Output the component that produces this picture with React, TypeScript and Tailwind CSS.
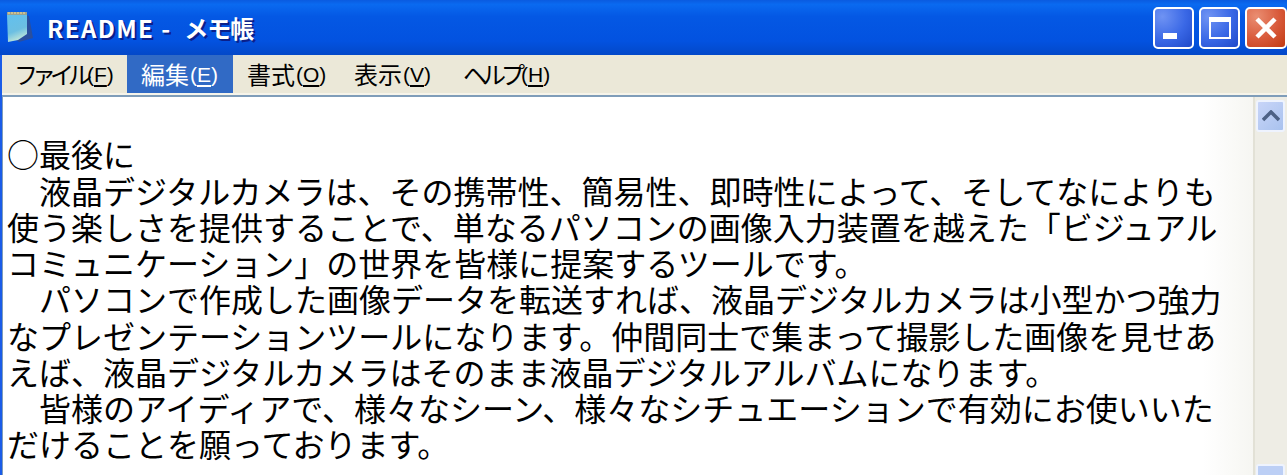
import React from 'react'

const lines = [
  '',
  '○最後に',
  '　液晶デジタルカメラは、その携帯性、簡易性、即時性によって、そしてなによりも',
  '使う楽しさを提供することで、単なるパソコンの画像入力装置を越えた「ビジュアル',
  'コミュニケーション」の世界を皆様に提案するツールです。',
  '　パソコンで作成した画像データを転送すれば、液晶デジタルカメラは小型かつ強力',
  'なプレゼンテーションツールになります。仲間同士で集まって撮影した画像を見せあ',
  'えば、液晶デジタルカメラはそのまま液晶デジタルアルバムになります。',
  '　皆様のアイディアで、様々なシーン、様々なシチュエーションで有効にお使いいた',
  'だけることを願っております。',
]

const menus = [
  { label: 'ファイル', key: 'F', labelClass: 'tracking-[-6px]', itemClass: 'w-[125px] pl-[12px]' },
  { label: '編集', key: 'E', labelClass: '', itemClass: 'w-[106px] pl-[14px] bg-[#316ac5] text-white' },
  { label: '書式', key: 'O', labelClass: '', itemClass: 'w-[107px] pl-[14px]' },
  { label: '表示', key: 'V', labelClass: '', itemClass: 'w-[109px] pl-[14px]' },
  { label: 'ヘルプ', key: 'H', labelClass: 'tracking-[-5px]', itemClass: 'w-[110px] pl-[14px]' },
]

function NotepadIcon() {
  return (
    <svg width="27" height="31" viewBox="0 0 27 31" className="shrink-0">
      <defs>
        <linearGradient id="pad" x1="0.2" y1="0" x2="0.5" y2="1">
          <stop offset="0" stopColor="#62c0ee" />
          <stop offset="0.6" stopColor="#6cbfe2" />
          <stop offset="1" stopColor="#c8ead8" />
        </linearGradient>
      </defs>
      <path d="M19 3 L22 4 L26 26 L12 30 L9 28 Z" fill="#2a4f9f" />
      <path d="M0 3 H20 V22 L11 28 L1 30 Z" fill="url(#pad)" />
      <path d="M0 0 H20 V3 H0 Z" fill="#9aa392" />
      <path d="M1 1 H19" stroke="#e0c98a" strokeWidth="1.5" strokeDasharray="2 1" />
    </svg>
  )
}

function CaptionButton({ kind }: { kind: 'min' | 'max' | 'close' }) {
  const bg =
    kind === 'close'
      ? 'w-[42px] bg-[radial-gradient(circle_at_25%_20%,#ea8e72,#d8593a_55%,#c23a12)]'
      : 'w-[41px] bg-[radial-gradient(circle_at_20%_20%,#6f93f3,#3a68e6_55%,#1f49c9)]'
  return (
    <div className={`h-[42px] rounded-[5px] border-2 border-white flex items-center justify-center relative ${bg}`}>
      {kind === 'min' && <div className="absolute left-[8px] bottom-[8px] w-[14px] h-[6px] bg-white" />}
      {kind === 'max' && (
        <div className="w-[22px] h-[22px] border-2 border-t-[5px] border-white" />
      )}
      {kind === 'close' && (
        <svg width="24" height="24" viewBox="0 0 24 24">
          <path d="M3 3 L21 21 M21 3 L3 21" stroke="#fff" strokeWidth="4.5" />
        </svg>
      )}
    </div>
  )
}

export default function App() {
  return (
    <div className="w-[1287px] h-[475px] overflow-hidden flex flex-col bg-white font-['Noto_Sans_CJK_JP',sans-serif]">
      {/* Title bar */}
      <div className="h-[55px] shrink-0 flex items-center bg-[linear-gradient(180deg,#0a5be0_0%,#0a6af0_8%,#0458e4_30%,#0352e0_75%,#0348c8_100%)]">
        <div className="ml-[7px] mr-[13px] flex">
          <NotepadIcon />
        </div>
        <div className="text-white text-[24px] font-bold tracking-[1.4px] leading-none [text-shadow:2px_2px_0_#0a1f8a] whitespace-pre">
          README - <span className="ml-[6px] tracking-[-1px]">メモ帳</span>
        </div>
        <div className="ml-auto flex gap-[5px]">
          <CaptionButton kind="min" />
          <CaptionButton kind="max" />
          <CaptionButton kind="close" />
        </div>
      </div>

      <div className="flex-1 min-h-0 flex flex-col border-l-2 border-[#1a5ce8]">
        {/* Menu bar */}
        <div className="h-[38px] shrink-0 flex bg-[#ebe8d8] text-[24px] text-black">
          {menus.map((m) => (
            <div key={m.key} className={`h-full flex items-center whitespace-nowrap leading-none ${m.itemClass}`}>
              <span className={m.labelClass}>{m.label}</span>
              <span className="font-['Liberation_Sans',sans-serif] text-[21px] ml-[1px]">
                (<span className="underline underline-offset-[3px]">{m.key}</span>)
              </span>
            </div>
          ))}
        </div>
        <div className="h-[2px] shrink-0 bg-[#f6f4ea]" />
        <div className="h-[2px] shrink-0 bg-[#7f9db9]" />

        {/* Edit area */}
        <div className="flex-1 min-h-0 flex">
          <div className="flex-1 min-w-0 border-l border-[#7f9db9] pl-[4px] pt-[2px] bg-[linear-gradient(90deg,#fff_96%,#f6f6f2_100%)]">
            {lines.map((line, i) => (
              <div key={i} className="h-[36.25px] leading-[36.25px] text-[32px] font-normal text-black whitespace-pre">
                {line}
              </div>
            ))}
          </div>

          {/* Scrollbar */}
          <div className="w-[34px] shrink-0 flex flex-col justify-between bg-[#eeede5] border-l-2 border-[#e2e1d6] pl-[1px] pt-[3px]">
            <div className="w-[29px] h-[32px] rounded-[3px] border-2 border-[#eef3fe] bg-[linear-gradient(135deg,#c8d5f8,#a9c2ee)] flex items-center justify-center">
              <svg width="18" height="12" viewBox="0 0 18 12">
                <path d="M1 10 L9 2 L17 10" fill="none" stroke="#4d6185" strokeWidth="3.5" />
              </svg>
            </div>
            <div className="w-[29px] h-[11px] rounded-t-[3px] border-2 border-b-0 border-[#eef3fe] bg-[#bccff5]" />
          </div>
        </div>
      </div>
    </div>
  )
}
